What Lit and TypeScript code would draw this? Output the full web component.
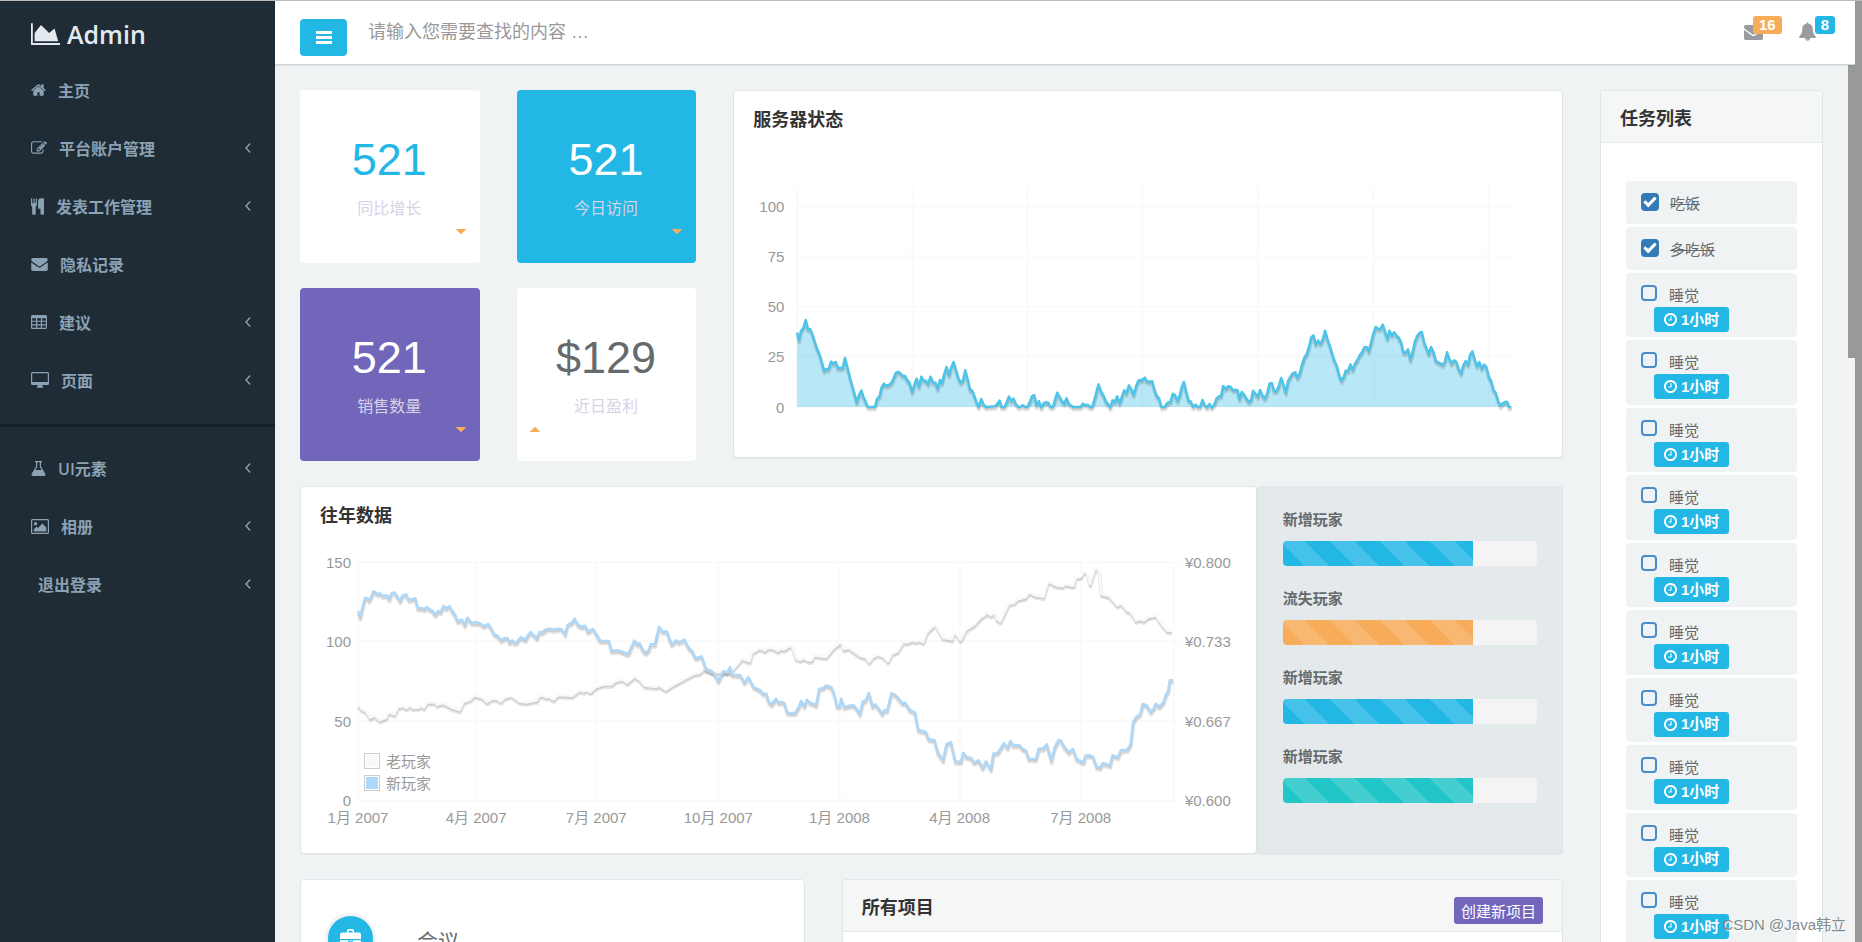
import { LitElement, html, svg, css } from "lit";
import { customElement, property } from "lit/decorators.js";
import { styleMap } from "lit/directives/style-map.js";
import { classMap } from "lit/directives/class-map.js";

const sharedStyles = css`
  *,
  *::before,
  *::after {
    box-sizing: border-box;
  }
  h1, h2, h3, p, ul {
    margin: 0;
    padding: 0;
  }
  ul {
    list-style: none;
  }
  svg {
    display: block;
    fill: currentColor;
  }
  button, input {
    font: inherit;
  }
  a {
    color: inherit;
    text-decoration: none;
  }
`;

interface IconShape {
  box: string;
  width: number;
  height: number;
  body: unknown;
}

const icons: Record<string, IconShape> = {
  logo: {
    box: "0 128 2048 1536", width: 29, height: 22,
    body: svg`<path d="M2048 1536v128h-2048v-1536h128v1408h1920zm-384-1024l256 896h-1664v-576l448-576 576 576z"/>`,
  },
  home: {
    box: "64 0 1664 1792", width: 15, height: 16,
    body: svg`<path d="M1472 992v480q0 26-19 45t-45 19h-384v-384h-256v384h-384q-26 0-45-19t-19-45v-480q0-1 .5-3t.5-3l575-474 575 474q1 2 1 6zm223-69l-62 74q-8 9-21 11h-3q-13 0-21-7l-692-577-692 577q-12 8-24 7-13-2-21-11l-62-74q-8-10-7-23.5t11-21.5l719-599q32-26 76-26t76 26l244 204v-195q0-14 9-23t23-9h192q14 0 23 9t9 23v408l219 182q10 8 11 21.5t-7 23.5z"/>`,
  },
  edit: {
    box: "0 0 1792 1792", width: 16, height: 16,
    body: svg`<path d="M888 1184l116-116-152-152-116 116v56h96v96h56zm440-720q-16-16-33 1l-350 350q-17 17-1 33t33-1l350-350q17-17 1-33zm80 594v190q0 119-84.5 203.5t-203.5 84.5h-832q-119 0-203.5-84.5t-84.5-203.5v-832q0-119 84.5-203.5t203.5-84.5h832q63 0 117 25 15 7 18 23 3 17-9 29l-49 49q-14 14-32 8-23-6-45-6h-832q-66 0-113 47t-47 113v832q0 66 47 113t113 47h832q66 0 113-47t47-113v-126q0-13 9-22l64-64q15-15 35-7t20 29zm-96-738l288 288-672 672h-288v-288zm444 132l-92 92-288-288 92-92q28-28 68-28t68 28l152 152q28 28 28 68t-28 68z"/>`,
  },
  cutlery: {
    box: "192 0 1408 1792", width: 13, height: 17,
    body: svg`<path d="M832 64v640q0 61-35.5 111t-92.5 70v779q0 52-38 90t-90 38h-128q-52 0-90-38t-38-90v-779q-57-20-92.5-70t-35.5-111v-640q0-26 19-45t45-19 45 19 19 45v416q0 26 19 45t45 19 45-19 19-45v-416q0-26 19-45t45-19 45 19 19 45v416q0 26 19 45t45 19 45-19 19-45v-416q0-26 19-45t45-19 45 19 19 45zm768 0v1600q0 52-38 90t-90 38h-128q-52 0-90-38t-38-90v-512h-224q-13 0-22.5-9.5t-9.5-22.5v-800q0-132 94-226t226-94h256q26 0 45 19t19 45z"/>`,
  },
  envelope: {
    box: "0 256 1792 1408", width: 17, height: 13,
    body: svg`<path d="M1792 710v794q0 66-47 113t-113 47h-1472q-66 0-113-47t-47-113v-794q44 49 101 87 362 246 497 345 57 42 92.5 65.5t94.5 48 110 24.5h2q51 0 110-24.5t94.5-48 92.5-65.5q170-123 498-345 57-39 100-87zm0-294q0 79-49 151t-122 123q-376 261-468 325-10 7-42.5 31t-54 38.5-52 32.5-57.5 27-50 9h-2q-23 0-50-9t-57.5-27-52-32.5-54-38.5-42.5-31q-91-64-262-182.5t-205-142.5q-62-42-117-115.5t-55-136.5q0-78 41.5-130t118.5-52h1472q65 0 112.5 47t47.5 113z"/>`,
  },
  table: {
    box: "0 0 16 14", width: 16, height: 14,
    body: svg`<path fill-rule="evenodd" d="M1.5 0h13A1.5 1.5 0 0 1 16 1.500v11A1.500 1.500 0 0 1 14.500 14h-13A1.500 1.500 0 0 1 0 12.500v-11A1.500 1.500 0 0 1 1.500 0zM1.200 3.200v2.500h3.800V3.200zm5 0v2.500h3.700V3.200zm4.900 0v2.500h3.700V3.200zM1.200 6.800v2.400h3.800V6.800zm5 0v2.400h3.700V6.800zm4.900 0v2.400h3.700V6.800zM1.200 10.400v2.400h3.800v-2.400zm5 0v2.400h3.700v-2.400zm4.900 0v2.400h3.700v-2.400z"/>`,
  },
  desktop: {
    box: "0 0 18 16", width: 18, height: 16,
    body: svg`<path fill-rule="evenodd" d="M1.500 0h15A1.500 1.500 0 0 1 18 1.500v10a1.500 1.500 0 0 1-1.500 1.500H11.500v1.500q1 .2 1 1.200h-7q0-1 1-1.200V13H1.500A1.500 1.500 0 0 1 0 11.500v-10A1.500 1.500 0 0 1 1.500 0zM1.500 1.200q-.3 0-.3.300V9.500q0 .4.300.4h15q.3 0 .3-.4v-8q0-.3-.3-.3z"/>`,
  },
  flask: {
    box: "0 0 15 15", width: 15, height: 15,
    body: svg`<path fill-rule="evenodd" d="M4 0h7v1.200h-1V5.500l4.300 7.200q.9 2.300-1.600 2.300H2.300Q-.2 15 .7 12.700L5 5.500V1.200H4zM6.200 1.200v4.700L4.300 9h6.400L8.800 5.900V1.200z"/>`,
  },
  picture: {
    box: "0 0 18 15", width: 18, height: 15,
    body: svg`<path fill-rule="evenodd" d="M1.500 0h15A1.500 1.500 0 0 1 18 1.500v12a1.500 1.500 0 0 1-1.500 1.500h-15A1.500 1.500 0 0 1 0 13.500v-12A1.500 1.500 0 0 1 1.500 0zM1.500 1.200q-.3 0-.3.300v12q0 .3.300.3h15q.3 0 .3-.3v-12q0-.3-.3-.3zM4.500 3a1.700 1.700 0 1 1 0 3.400 1.700 1.700 0 0 1 0-3.400zM2.700 12.500v-2L5.600 7.600 7 9l4.300-4.400 4 4v3.900z"/>`,
  },
  clock: {
    box: "128 128 1536 1536", width: 13, height: 13,
    body: svg`<path d="M1024 544v448q0 14-9 23t-23 9h-320q-14 0-23-9t-9-23v-64q0-14 9-23t23-9h224v-352q0-14 9-23t23-9h64q14 0 23 9t9 23zm416 352q0-148-73-273t-198-198-273-73-273 73-198 198-73 273 73 273 198 198 273 73 273-73 198-198 73-273zm224 0q0 209-103 385.5t-279.5 279.5-385.5 103-385.5-103-279.5-279.500-103-385.500 103-385.500 279.500-279.500 385.500-103 385.500 103 279.500 279.500 103 385.500z"/>`,
  },
  bell: {
    box: "64 0 1664 1792", width: 17, height: 19,
    body: svg`<path d="M912 1696q0-16-16-16-59 0-101.5-42.5t-42.5-101.5q0-16-16-16t-16 16q0 73 51.5 124.5t124.5 51.5q16 0 16-16zm816-288q0 52-38 90t-90 38h-448q0 106-75 181t-181 75-181-75-75-181h-448q-52 0-90-38t-38-90q50-42 91-88t85-119.5 74.5-158.5 50-206 19.500-260q0-152 117-282.500t307-158.500q-8-19-8-39 0-40 28-68t68-28 68 28 28 68q0 20-8 39 190 28 307 158.500t117 282.500q0 139 19.500 260t50 206 74.500 158.500 85 119.500 91 88z"/>`,
  },
  mail: {
    box: "0 256 1792 1408", width: 19, height: 15,
    body: null,
  },
  bars: {
    box: "0 0 16 13", width: 16, height: 13,
    body: svg`<path d="M0 0h16v3H0zM0 5h16v3H0zM0 10h16v3H0z"/>`,
  },
  chevron: {
    box: "0 0 6 10", width: 6, height: 10,
    body: svg`<path d="M5.200.5 1 5l4.200 4.500" fill="none" stroke="currentColor" stroke-width="1.400"/>`,
  },
  down: {
    box: "0 0 10 5", width: 10, height: 5,
    body: svg`<path d="M.5 0h9q.7 0 .2.700L5.500 4.800q-.5.4-1 0L.3.700Q-.2 0 .5 0z"/>`,
  },
  up: {
    box: "0 0 10 5", width: 10, height: 5,
    body: svg`<path d="M.5 5h9q.7 0 .2-.700L5.500.200q-.5-.4-1 0L.3 4.300q-.5.700.2.700z"/>`,
  },
  briefcase: {
    box: "0 0 21 19", width: 21, height: 19,
    body: svg`<path fill-rule="evenodd" d="M7 3.500V1.500Q7 0 8.500 0h4Q14 0 14 1.500v2h5q2 0 2 2V10H0V5.500q0-2 2-2zM8.500 1.700v1.800h4V1.700zM0 11.200h8.300v1.300q0 .7.700.7h3q.7 0 .7-.7v-1.300H21V17q0 2-2 2H2q-2 0-2-2zM9.300 11.200h2.400v1H9.300z"/>`,
  },
};
icons.mail.body = icons.envelope.body;

const icon = (name: string) => {
  const i = icons[name];
  return html`<svg viewBox=${i.box} width=${i.width} height=${i.height} aria-hidden="true">${i.body}</svg>`;
};

const serverLoad =
  "231,758 237,780 243,752 250,745 257,720 264,748 271,748 278,765 284,785 291,806 298,822 305,845 312,872 318,867 326,868 333,845 340,850 347,846 354,864 361,863 368,864 375,834 382,862 389,890 396,915 403,940 410,967 417,945 424,932 430,950 437,965 444,981 465,981 471,957 479,948 485,922 492,911 499,917 506,915 513,911 520,897 527,880 534,875 541,880 548,887 555,888 562,900 569,910 577,936 583,914 590,896 597,920 604,890 611,902 618,902 625,912 632,890 639,907 646,908 653,926 660,900 666,910 673,882 680,861 687,885 694,862 701,846 708,870 715,893 722,908 729,902 736,871 743,897 750,928 757,932 764,950 771,970 776,981 784,957 791,974 798,981 825,979 832,972 839,962 845,981 854,981 861,965 867,950 874,961 881,956 888,972 895,981 902,980 909,976 916,981 923,980 930,965 936,949 943,945 950,977 957,963 964,983 971,970 978,967 985,968 992,981 999,981 1006,957 1012,938 1020,952 1027,964 1033,971 1040,955 1047,972 1060,981 1082,981 1089,971 1096,975 1103,974 1110,981 1117,981 1124,957 1136,913 1144,935 1151,947 1158,964 1165,973 1171,983 1178,961 1185,966 1192,949 1199,970 1206,950 1213,931 1220,940 1227,916 1234,927 1241,944 1248,921 1255,903 1262,900 1269,898 1275,893 1282,904 1289,905 1297,904 1304,930 1311,947 1318,956 1325,981 1335,981 1342,969 1352,965 1359,941 1366,946 1373,963 1380,945 1386,920 1392,906 1399,934 1406,961 1413,965 1420,981 1427,974 1434,981 1441,981 1448,960 1455,976 1462,983 1469,972 1476,983 1483,974 1490,956 1497,949 1504,947 1510,918 1518,926 1525,919 1532,920 1539,929 1546,930 1553,930 1559,957 1566,936 1573,944 1580,955 1587,966 1594,960 1600,932 1607,941 1614,950 1621,930 1628,947 1635,955 1642,941 1649,911 1656,909 1663,933 1670,933 1677,918 1684,894 1691,913 1698,938 1705,903 1712,890 1719,880 1726,877 1733,893 1740,880 1747,853 1754,832 1761,822 1768,800 1774,773 1781,766 1788,793 1795,782 1802,791 1809,778 1816,752 1823,778 1830,797 1837,820 1844,842 1851,857 1858,885 1865,902 1872,891 1878,872 1885,873 1892,853 1899,870 1906,851 1913,840 1920,826 1927,817 1934,802 1941,801 1947,814 1954,788 1961,760 1968,741 1975,746 1982,747 1989,734 1996,755 2003,777 2009,752 2016,766 2023,757 2030,766 2037,773 2044,787 2051,817 2058,818 2065,808 2072,840 2079,815 2086,783 2093,767 2100,758 2106,756 2113,787 2120,804 2127,822 2134,801 2141,816 2148,841 2155,847 2162,850 2169,855 2176,844 2182,817 2189,837 2196,850 2203,841 2210,846 2217,868 2224,880 2231,856 2238,843 2245,854 2251,825 2258,814 2265,839 2272,858 2279,846 2286,866 2293,854 2300,861 2307,890 2314,902 2321,929 2328,938 2335,962 2342,977 2349,970 2356,966 2362,965 2369,981 2375,982";

const newPlayers =
  "204,394 211,412 218,380 225,355 232,356 238,362 244,350 250,335 257,338 264,343 270,341 277,348 290,347 298,358 304,341 313,338 322,350 330,364 337,348 348,344 356,360 368,358 376,356 383,385 392,385 403,388 411,382 418,388 428,394 436,405 444,394 452,396 460,379 468,386 478,379 487,395 495,405 502,424 516,420 524,436 532,414 544,429 560,428 572,432 582,439 594,433 603,445 612,463 622,468 634,482 643,475 652,475 659,488 666,482 673,489 680,487 692,472 705,480 714,466 721,457 730,466 740,475 748,457 757,458 768,449 780,447 790,450 800,447 815,449 825,464 832,436 846,428 853,417 862,433 872,441 884,438 893,455 908,448 918,462 930,483 956,484 964,513 985,512 1014,523 1032,483 1042,494 1048,491 1057,510 1066,519 1075,512 1081,494 1094,494 1106,441 1116,455 1130,456 1144,494 1157,482 1165,488 1182,480 1194,502 1206,515 1216,535 1234,530 1247,567 1262,573 1272,583 1284,604 1299,574 1310,579 1319,562 1326,585 1350,587 1362,608 1374,592 1390,622 1410,632 1418,641 1428,642 1434,665 1443,674 1457,657 1464,668 1476,667 1482,670 1490,698 1498,700 1514,700 1525,682 1532,664 1542,680 1549,660 1560,669 1577,676 1586,628 1600,624 1607,617 1623,623 1630,640 1640,680 1647,680 1652,657 1661,682 1688,676 1698,686 1708,703 1717,665 1726,662 1735,640 1746,680 1754,674 1764,686 1775,702 1782,692 1790,692 1803,640 1815,646 1836,671 1844,669 1858,691 1873,698 1883,750 1906,757 1914,778 1932,782 1942,820 1950,830 1957,842 1968,793 1981,788 1994,845 2011,846 2018,819 2028,832 2042,835 2050,848 2064,842 2076,865 2086,845 2101,869 2108,822 2122,819 2140,790 2151,804 2159,784 2168,797 2186,796 2196,808 2206,812 2214,837 2236,838 2244,807 2258,806 2268,794 2282,843 2292,803 2303,781 2311,783 2320,800 2334,818 2347,808 2358,838 2378,848 2384,828 2396,826 2407,832 2418,862 2428,864 2436,850 2458,857 2465,827 2482,832 2490,812 2510,810 2520,793 2527,728 2536,712 2548,704 2556,673 2568,677 2580,697 2590,685 2595,672 2605,681 2618,668 2626,642 2632,636 2637,602 2647,602";

const oldPlayers =
  "204,674 216,689 228,694 241,714 253,707 269,721 288,714 295,697 313,704 324,682 338,679 349,685 357,677 368,684 385,684 393,678 402,684 411,668 433,667 441,675 458,670 482,682 508,691 520,667 542,658 551,647 576,653 591,667 606,657 618,657 632,665 644,653 664,648 690,666 708,668 740,662 748,648 760,648 768,653 776,651 790,659 804,646 846,648 868,631 880,635 888,631 902,637 914,624 940,614 964,614 974,605 996,599 1011,609 1033,590 1047,599 1064,618 1098,621 1108,618 1126,630 1148,616 1190,593 1212,582 1226,580 1240,568 1262,577 1320,578 1354,537 1378,545 1384,520 1408,505 1424,512 1432,504 1446,505 1462,514 1472,507 1480,509 1504,496 1518,537 1530,540 1540,535 1552,542 1564,542 1570,527 1607,532 1628,506 1652,486 1660,508 1674,504 1710,529 1726,533 1736,547 1746,532 1764,524 1780,532 1792,545 1804,522 1820,516 1838,487 1848,488 1868,482 1878,486 1882,480 1898,487 1908,459 1934,433 1958,474 1984,479 1990,455 2010,480 2026,450 2050,435 2070,414 2090,399 2102,407 2110,396 2120,419 2129,425 2154,372 2170,369 2180,359 2204,353 2216,338 2234,347 2258,351 2272,305 2294,316 2315,320 2322,313 2348,318 2354,294 2370,291 2380,274 2390,282 2398,313 2413,264 2424,272 2432,343 2456,349 2480,377 2492,370 2508,392 2520,396 2536,422 2546,418 2560,422 2572,412 2596,407 2612,432 2630,453 2642,454";

const chartStyles = css`
  .grid {
    stroke: #f9fafb;
    stroke-width: 2;
    fill: none;
  }
  .grid, .line, .shade {
    vector-effect: non-scaling-stroke;
  }
  .line, .shade {
    fill: none;
    stroke-linejoin: round;
  }
  .line {
    stroke-width: 2.5;
  }
  .shade {
    stroke: #000000;
    stroke-opacity: 0.1;
  }
  .wide {
    stroke-width: 3.75;
  }
  .thin {
    stroke-width: 1.9;
  }
  .plot {
    width: 100%;
    overflow: visible;
  }
  .labels {
    display: flex;
    flex-direction: column;
    justify-content: space-between;
  }
  .labels span {
    height: 0;
    display: flex;
    align-items: center;
    justify-content: flex-end;
  }
  :host {
    display: block;
    font-size: 15px;
    color: #999999;
  }
`;

const series = (points: string, color: string) => svg`
  <polyline class="shade wide" points=${points} transform="translate(1 8)"></polyline>
  <polyline class="shade thin" points=${points} transform="translate(1 6)"></polyline>
  <polyline class="line" points=${points} stroke=${color}></polyline>`;

@customElement("server-chart")
class ServerChart extends LitElement {
  static styles = [sharedStyles, chartStyles, css`
    .chart {
      display: grid;
      grid-template-columns: 30px 1fr;
      column-gap: 13px;
      padding: 43px 50px 50px 20px;
    }
    .labels {
      padding-top: 20px;
    }
    .plot {
      height: 221px;
    }
  `];

  render() {
    const columns = [232, 577, 922, 1267, 1616, 1961, 2307];
    const rows = [379, 529, 680, 829, 980];
    return html`<div class="chart">
      <div class="labels">${[100, 75, 50, 25, 0].map((n) => html`<span>${n}</span>`)}</div>
      <svg class="plot" viewBox="231 318 2145 663" preserveAspectRatio="none" role="img" aria-label="服务器状态">
        ${columns.map((x) => svg`<path class="grid" d="M${x} 318V981"></path>`)}
        ${rows.map((y) => svg`<path class="grid" d="M231 ${y}H2376"></path>`)}
        <polygon points="231,981 ${serverLoad} 2375,981" fill="#23b7e5" fill-opacity="0.320"></polygon>
        ${series(serverLoad, "#4dc5ea")}
      </svg>
    </div>`;
  }
}

@customElement("history-chart")
class HistoryChart extends LitElement {
  static styles = [sharedStyles, chartStyles, css`
    .chart {
      display: grid;
      grid-template-columns: 30px 1fr 46px;
      padding: 23px 25px 28px 20px;
      column-gap: 7px;
    }
    .plot {
      height: 239px;
    }
    .area {
      display: grid;
      padding-right: 4px;
    }
    .area > * {
      grid-area: 1 / 1;
    }
    .legend {
      align-self: end;
      padding: 0 0 9px 6px;
      display: grid;
      row-gap: 3px;
    }
    .legend li {
      display: flex;
      align-items: center;
      gap: 6px;
      height: 19px;
    }
    .swatch {
      width: 16px;
      height: 16px;
      border: 1px solid #cccccc;
      padding: 1px;
      background: #f8f9fb content-box;
    }
    .swatch.new {
      background-color: #afd8f8;
    }
    .months {
      grid-column: 2;
      display: grid;
      grid-template-columns: 118fr 120fr 122fr 121fr 120fr 121fr 97fr;
      height: 24px;
      padding-top: 5px;
    }
    .months span {
      width: 0;
      display: flex;
      justify-content: center;
      white-space: nowrap;
    }
  `];

  render() {
    const columns = [205, 559, 919, 1284, 1648, 2008, 2371, 2649];
    const rows = [247, 484, 723, 963];
    const months = ["1月 2007", "4月 2007", "7月 2007", "10月 2007", "1月 2008", "4月 2008", "7月 2008"];
    return html`<div class="chart">
      <div class="labels">${[150, 100, 50, 0].map((n) => html`<span>${n}</span>`)}</div>
      <div class="area">
        <svg class="plot" viewBox="204 247 2445 717" preserveAspectRatio="none" role="img" aria-label="往年数据">
          ${columns.map((x) => svg`<path class="grid" d="M${x} 247V964"></path>`)}
          ${rows.map((y) => svg`<path class="grid" d="M204 ${y}H2667"></path>`)}
          ${series(oldPlayers, "#f8f9fb")}
          ${series(newPlayers, "#afd8f8")}
        </svg>
        <ul class="legend">
          <li><span class="swatch"></span>老玩家</li>
          <li><span class="swatch new"></span>新玩家</li>
        </ul>
      </div>
      <div class="labels">${["0.800", "0.733", "0.667", "0.600"].map((n) => html`<span>¥${n}</span>`)}</div>
      <div class="months">${months.map((m) => html`<span>${m}</span>`)}</div>
    </div>`;
  }
}

@customElement("stat-card")
class StatCard extends LitElement {
  @property() value = "";
  @property() label = "";
  @property() tone = "plain";
  @property() trend = "down";

  static styles = [sharedStyles, css`
    :host {
      display: block;
    }
    .card {
      height: 173px;
      border-radius: 4px;
      background: #ffffff;
      color: #23b7e5;
      padding: 42px 14px 0 13px;
      text-align: center;
    }
    .value {
      font-size: 45px;
      line-height: 56px;
    }
    .label {
      color: #d6d3e6;
      font-size: 16px;
      line-height: 24px;
      padding-top: 9px;
    }
    .trend {
      display: flex;
      justify-content: flex-end;
      color: #f8ac59;
      padding-top: 8px;
    }
    .trend.up {
      justify-content: flex-start;
    }
    .blue {
      background: #23b7e5;
      color: #ffffff;
    }
    .purple {
      background: #7266ba;
      color: #ffffff;
    }
    .money {
      color: #676a6c;
    }
  `];

  render() {
    return html`<div class="card ${this.tone}">
      <div class="value">${this.value}</div>
      <div class="label">${this.label}</div>
      <div class="trend ${this.trend}">${icon(this.trend)}</div>
    </div>`;
  }
}

@customElement("side-menu")
class SideMenu extends LitElement {
  static styles = [sharedStyles, css`
    :host {
      display: block;
      background: #1f2b35;
      color: #8ba2b4;
      overflow: hidden;
      font-family: "Open Sans", "Noto Sans CJK SC", sans-serif;
    }
    .brand {
      display: flex;
      align-items: center;
      gap: 7px;
      padding: 16px 31px 10px;
      height: 60px;
      font-size: 25px;
      line-height: 34px;
      font-weight: 600;
      color: #e4e9ef;
    }
    .item {
      display: flex;
      align-items: center;
      height: 58px;
      padding: 0 24px 0 31px;
      font-size: 16px;
      font-weight: 600;
    }
    .name {
      flex: 1;
      padding-left: 12px;
    }
    .bare {
      padding-left: 7px;
    }
    .group + .group {
      border-top: 3px solid #151e26;
      margin-top: 15px;
      padding-top: 12px;
    }
  `];

  private item(name: string, glyph: string, open: boolean) {
    return html`<li><a class="item" href="#">
      ${glyph ? icon(glyph) : ""}
      <span class=${classMap({ name: true, bare: !glyph })}>${name}</span>
      ${open ? icon("chevron") : ""}
    </a></li>`;
  }

  render() {
    return html`
      <a class="brand" href="#">${icon("logo")}<span>Admin</span></a>
      <nav>
        <ul class="group">
          ${this.item("主页", "home", false)}
          ${this.item("平台账户管理", "edit", true)}
          ${this.item("发表工作管理", "cutlery", true)}
          ${this.item("隐私记录", "envelope", false)}
          ${this.item("建议", "table", true)}
          ${this.item("页面", "desktop", true)}
        </ul>
        <ul class="group">
          ${this.item("UI元素", "flask", true)}
          ${this.item("相册", "picture", true)}
          ${this.item("退出登录", "", true)}
        </ul>
      </nav>`;
  }
}

@customElement("top-bar")
class TopBar extends LitElement {
  static styles = [sharedStyles, css`
    :host {
      display: flex;
      align-items: flex-start;
      height: 64px;
      padding: 15px 20px 0 25px;
      background: #ffffff;
      border-bottom: 1px solid #cfd5d8;
      box-shadow: 0 1px 2px rgba(0, 0, 0, 0.08);
      z-index: 1;
    }
    .toggle {
      width: 47px;
      height: 37px;
      margin-top: 3px;
      border: 0;
      border-radius: 4px;
      background: #23b7e5;
      color: #ffffff;
      display: flex;
      align-items: center;
      justify-content: center;
    }
    .search {
      flex: 1;
      min-width: 0;
      margin-left: 21px;
      height: 32px;
      border: 0;
      padding: 0;
      outline: 0;
      font-size: 18px;
      background: transparent;
    }
    .search::placeholder {
      color: #999999;
      opacity: 1;
    }
    .alerts {
      display: flex;
      gap: 17px;
      color: #999c9e;
    }
    .alert {
      display: flex;
      align-items: flex-start;
    }
    .alert svg {
      margin-top: 9px;
    }
    .alert.ring svg {
      margin-top: 6px;
    }
    .count {
      height: 18px;
      padding: 0 6px;
      border-radius: 3px;
      font-size: 15px;
      line-height: 18px;
      font-weight: 700;
      color: #ffffff;
      background: #f8ac59;
      margin-left: -10px;
      z-index: 1;
    }
    .ring .count {
      background: #23b7e5;
      margin-left: -1px;
    }
  `];

  render() {
    return html`
      <button class="toggle" type="button" aria-label="菜单">${icon("bars")}</button>
      <input class="search" type="text" aria-label="查找" placeholder="请输入您需要查找的内容 …" />
      <div class="alerts">
        <a class="alert" href="#">${icon("mail")}<span class="count">16</span></a>
        <a class="alert ring" href="#">${icon("bell")}<span class="count">8</span></a>
      </div>`;
  }
}

@customElement("task-list")
class TaskList extends LitElement {
  static styles = [sharedStyles, css`
    :host {
      display: block;
    }
    .list {
      display: grid;
      row-gap: 3px;
      padding: 38px 25px 25px;
      font-size: 15px;
      line-height: 1.43;
    }
    .task {
      background: #eff3f4;
      border-radius: 4px;
      padding: 10px 15px;
      color: #676a6c;
    }
    .line {
      display: flex;
      align-items: flex-start;
      height: 23px;
    }
    .text {
      margin-left: 12px;
      padding-top: 2px;
    }
    .box {
      appearance: none;
      width: 16px;
      height: 16px;
      margin: 2px 0 0;
      border: 2px solid #4a8cc7;
      border-radius: 4px;
    }
    .box:checked {
      width: 18px;
      height: 18px;
      background: #337ab7;
      border-color: #337ab7;
      display: grid;
      place-items: center;
    }
    .box:checked::before {
      content: "";
      width: 12px;
      height: 7px;
      border: solid #ffffff;
      border-width: 0 0 3px 3px;
      transform: translateY(-2px) rotate(-45deg);
    }
    .box:checked + .text {
      text-decoration: line-through;
      margin-left: 11px;
    }
    .time {
      height: 1.43em;
      padding: 1px 0 0 13px;
    }
    .badge {
      display: inline-flex;
      align-items: center;
      gap: 4px;
      height: 25px;
      padding: 0 10px;
      border-radius: 3px;
      background: #23b7e5;
      color: #ffffff;
      font-weight: 700;
      white-space: nowrap;
    }
  `];

  render() {
    const tasks = [
      { text: "吃饭", done: true },
      { text: "多吃饭", done: true },
      ...Array.from({ length: 11 }, () => ({ text: "睡觉", done: false })),
    ];
    return html`<ul class="list">${tasks.map((t) => html`<li class="task">
      <label class="line">
        <input class="box" type="checkbox" .checked=${t.done} />
        <span class="text">${t.text}</span>
      </label>
      ${t.done ? "" : html`<div class="time"><span class="badge">${icon("clock")}1小时</span></div>`}
    </li>`)}</ul>`;
  }
}

@customElement("app-root")
class AppRoot extends LitElement {
  static styles = [sharedStyles, css`
    :host {
      display: block;
      font-family: "Liberation Sans", "Noto Sans CJK SC", sans-serif;
      font-size: 15px;
      color: #676a6c;
    }
    .app {
      height: 100vh;
      display: grid;
      grid-template-columns: 275px minmax(0, 1fr) 7px;
      border-top: 1px solid #b9b9b9;
      overflow: hidden;
    }
    .outer-bar {
      background: #999999;
    }
    .main {
      display: flex;
      flex-direction: column;
      min-width: 0;
      min-height: 0;
    }
    .body {
      flex: 1;
      min-height: 0;
      display: grid;
      grid-template-columns: minmax(0, 1fr) 7px;
      background: #eff3f4;
    }
    .track {
      background: #f4f4f4;
    }
    .thumb {
      height: 33.4%;
      background: #999999;
    }
    .scroll {
      overflow-y: auto;
      scrollbar-width: none;
      padding: 25px;
    }
    .columns {
      display: grid;
      grid-template-columns: repeat(12, minmax(0, 1fr));
      column-gap: 37px;
      row-gap: 25px;
      align-items: start;
    }
    .span-10 { grid-column: span 10; }
    .span-2 { grid-column: span 2; }
    .span-4 { grid-column: span 4; }
    .span-8 { grid-column: span 8; }
    .span-5 { grid-column: span 5; }
    .span-7 { grid-column: span 7; }
    .span-12 { grid-column: span 12; }
    .stats {
      display: grid;
      grid-template-columns: 1fr 1fr;
      gap: 25px 37px;
    }
    .panel {
      background: #ffffff;
      border: 1px solid #dfe6e8;
      border-radius: 4px;
      box-shadow: 0 1px 1px rgba(0, 0, 0, 0.05);
      overflow: hidden;
    }
    .title {
      height: 52px;
      display: flex;
      align-items: center;
      justify-content: space-between;
      padding: 1px 19px 0;
      font-size: 18px;
      font-weight: 700;
      color: #333333;
    }
    .title.shaded {
      background: #f5f7f7;
      border-bottom: 1px solid #e4e8e9;
    }
    .history {
      display: grid;
      grid-template-columns: 25fr 8fr;
    }
    .meters {
      background: #e4e9eb;
      padding: 22px 25px 0;
      display: grid;
      align-content: start;
      row-gap: 22px;
    }
    .meter-name {
      font-weight: 600;
      line-height: 22px;
      margin-bottom: 10px;
    }
    .meter {
      height: 25px;
      border-radius: 4px;
      background: #f4f4f4;
      overflow: hidden;
    }
    .fill {
      height: 100%;
      background-color: #23b7e5;
      background-image: linear-gradient(
        45deg,
        rgba(255, 255, 255, 0.15) 25%,
        transparent 25%,
        transparent 50%,
        rgba(255, 255, 255, 0.15) 50%,
        rgba(255, 255, 255, 0.15) 75%,
        transparent 75%
      );
      background-size: 50px 50px;
      background-position: -3px 0;
    }
    .orange { background-color: #f8ac59; }
    .teal { background-color: #23c6c8; }
    .event {
      display: flex;
      gap: 41px;
      padding: 33px 24px 25px;
      align-items: flex-start;
    }
    .disc {
      width: 51px;
      height: 51px;
      border: 3px solid #f1f2f2;
      border-radius: 50%;
      background: #23b7e5;
      color: #ffffff;
      display: flex;
      align-items: center;
      justify-content: center;
    }
    .event h3 {
      font-size: 21px;
      font-weight: 400;
      line-height: 30px;
      padding-top: 14px;
    }
    .create {
      border: 0;
      border-radius: 3px;
      height: 27px;
      padding: 0 7px;
      font-size: 15px;
      font-weight: 400;
      background: #7266ba;
      color: #ffffff;
    }
    .create-slot {
      padding-top: 8px;
      display: flex;
    }
    .projects {
      height: 120px;
    }
    .watermark {
      position: absolute;
      right: 16px;
      bottom: 6px;
      font-size: 15px;
      line-height: 22px;
      color: #86898b;
      text-shadow: 1px 1px 0 #ffffff;
      z-index: 2;
    }
  `];

  render() {
    const meters = [
      { name: "新增玩家", tone: "", value: 75 },
      { name: "流失玩家", tone: "orange", value: 75 },
      { name: "新增玩家", tone: "", value: 75 },
      { name: "新增玩家", tone: "teal", value: 75 },
    ];
    return html`<div class="app">
      <side-menu></side-menu>
      <div class="main">
        <top-bar></top-bar>
        <div class="body">
          <main class="scroll">
            <div class="columns">
              <div class="columns span-10">
                <div class="stats span-4">
                  <stat-card value="521" label="同比增长"></stat-card>
                  <stat-card value="521" label="今日访问" tone="blue"></stat-card>
                  <stat-card value="521" label="销售数量" tone="purple"></stat-card>
                  <stat-card value="$129" label="近日盈利" tone="money" trend="up"></stat-card>
                </div>
                <section class="panel span-8">
                  <h2 class="title">服务器状态</h2>
                  <server-chart></server-chart>
                </section>
                <div class="history span-12">
                  <section class="panel">
                    <h2 class="title">往年数据</h2>
                    <history-chart></history-chart>
                  </section>
                  <section class="panel meters">
                    ${meters.map((m) => html`<div>
                      <div class="meter-name">${m.name}</div>
                      <div class="meter" role="progressbar" aria-valuenow=${m.value} aria-label=${m.name}>
                        <div class="fill ${m.tone}" style=${styleMap({ width: `${m.value}%` })}></div>
                      </div>
                    </div>`)}
                  </section>
                </div>
                <section class="panel span-5">
                  <div class="event">
                    <div class="disc">${icon("briefcase")}</div>
                    <h3>会议</h3>
                  </div>
                </section>
                <section class="panel span-7 projects">
                  <h2 class="title shaded">所有项目
                    <span class="create-slot"><button class="create" type="button">创建新项目</button></span>
                  </h2>
                </section>
              </div>
              <section class="panel span-2">
                <h2 class="title shaded">任务列表</h2>
                <task-list></task-list>
              </section>
            </div>
          </main>
          <div class="track"><div class="thumb"></div></div>
        </div>
      </div>
      <div class="outer-bar"></div>
      <div class="watermark">CSDN @Java韩立</div>
    </div>`;
  }
}
